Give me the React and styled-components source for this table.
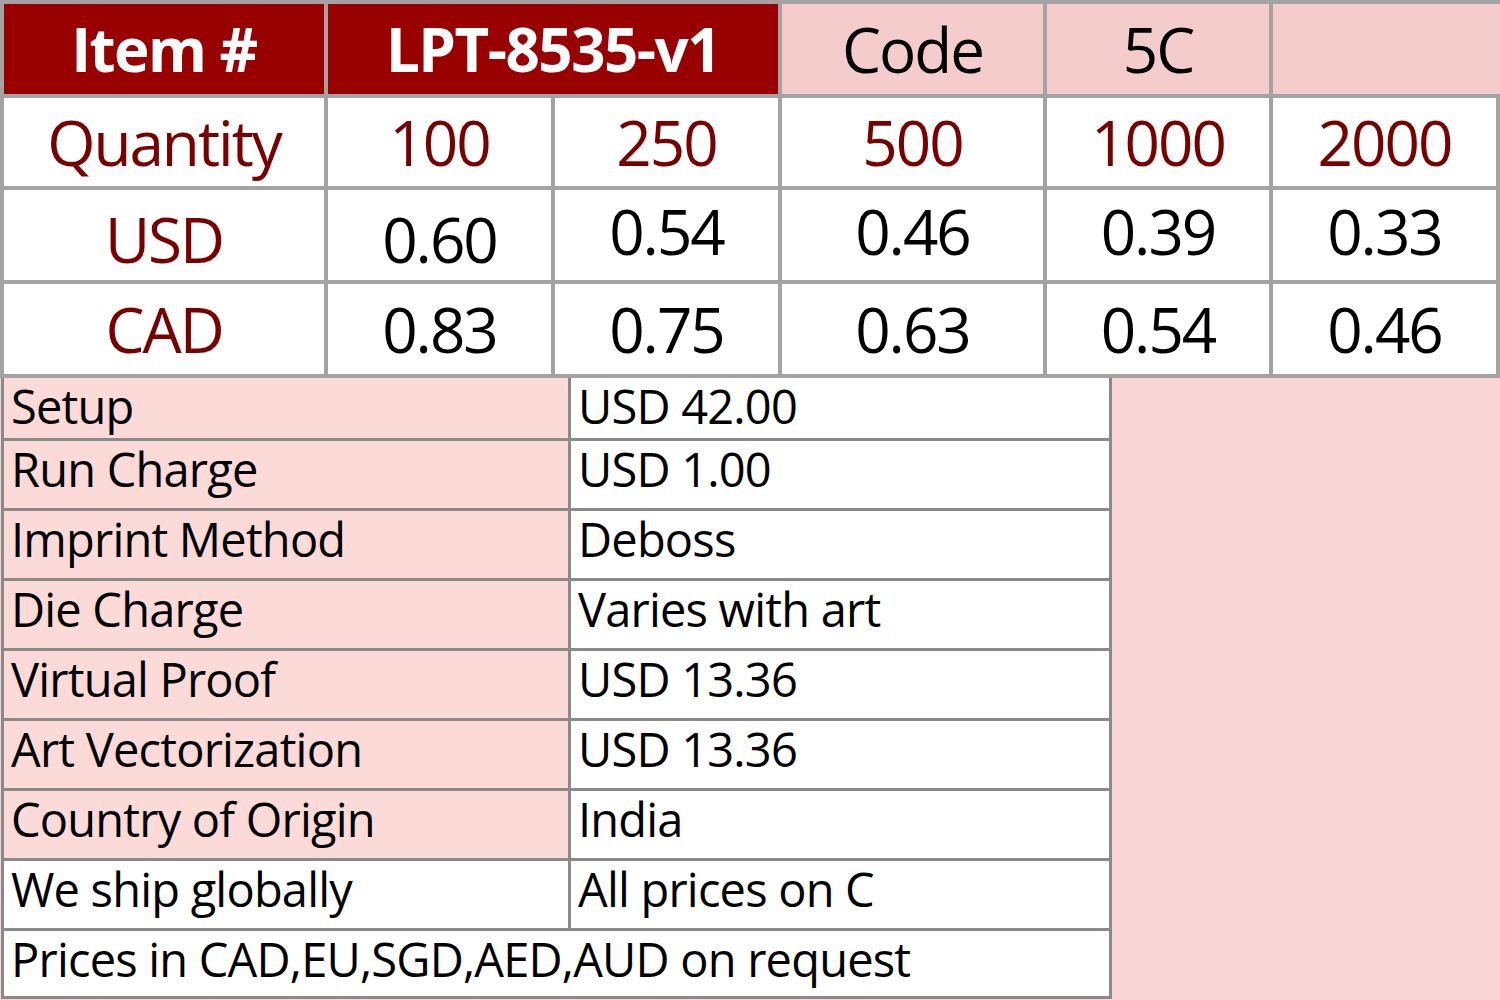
import React from "react";
import styled, { createGlobalStyle } from "styled-components";

const GlobalStyle = createGlobalStyle`
  html, body {
    margin: 0;
    padding: 0;
    background: #f9d6d5;
    font-family: "Open Sans", "Noto Sans", sans-serif;
  }
`;

const tiers = [
  { qty: "100", usd: "0.60", cad: "0.83", usdLow: true },
  { qty: "250", usd: "0.54", cad: "0.75" },
  { qty: "500", usd: "0.46", cad: "0.63" },
  { qty: "1000", usd: "0.39", cad: "0.54" },
  { qty: "2000", usd: "0.33", cad: "0.46" },
];

const details = [
  ["Setup", "USD 42.00"],
  ["Run Charge", "USD 1.00"],
  ["Imprint Method", "Deboss"],
  ["Die Charge", "Varies with art"],
  ["Virtual Proof", "USD 13.36"],
  ["Art Vectorization", "USD 13.36"],
  ["Country of Origin", "India"],
];

const App = () => {
  return (
    <>
      <GlobalStyle />
      <Page>
        <PriceGrid>
          <HeadCell>Item #</HeadCell>
          <HeadCell $span={2}>LPT-8535-v1</HeadCell>
          <CodeCell>Code</CodeCell>
          <CodeCell>5C</CodeCell>
          <CodeCell $last />

          <Cell $red>Quantity</Cell>
          {tiers.map((t) => (
            <Cell key={t.qty} $red>
              {t.qty}
            </Cell>
          ))}

          <Cell $red $nudge={8}>
            USD
          </Cell>
          {tiers.map((t) => (
            <Cell key={t.qty} $nudge={t.usdLow ? 8 : -8}>
              {t.usd}
            </Cell>
          ))}

          <Cell $red>CAD</Cell>
          {tiers.map((t) => (
            <Cell key={t.qty}>{t.cad}</Cell>
          ))}
        </PriceGrid>

        <InfoGrid>
          {details.map(([label, value]) => (
            <React.Fragment key={label}>
              <Label $pink>{label}</Label>
              <Label>{value}</Label>
            </React.Fragment>
          ))}
          <Label>We ship globally</Label>
          <Label>All prices on C</Label>
          <Label $wide>Prices in CAD,EU,SGD,AED,AUD on request</Label>
        </InfoGrid>
      </Page>
    </>
  );
};

export default App;

const Page = styled.div`
  width: 1500px;
  height: 1000px;
  overflow: hidden;
`;

const PriceGrid = styled.div`
  display: grid;
  grid-template-columns: 320px 223px 223px 261px 222px 223px;
  grid-template-rows: 90px 88px 90px 90px;
  gap: 4px;
  padding: 4px;
  background: #a3a3a3;
  font-size: 62px;
  line-height: 1;
  letter-spacing: -2px;
`;

const Cell = styled.div`
  display: flex;
  align-items: center;
  justify-content: center;
  background: #ffffff;
  color: ${(p) => (p.$red ? "#7a0000" : "#000000")};
  padding-top: ${(p) => (p.$nudge > 0 ? p.$nudge : 0)}px;
  padding-bottom: ${(p) => (p.$nudge < 0 ? -p.$nudge : 0)}px;
`;

const HeadCell = styled(Cell)`
  grid-column: span ${(p) => p.$span || 1};
  background: #990000;
  color: #ffffff;
  font-weight: 700;
  font-size: 60px;
  letter-spacing: -1.5px;
`;

const CodeCell = styled(Cell)`
  background: #f4cccc;
  margin-right: ${(p) => (p.$last ? "-4px" : "0")};
`;

const InfoGrid = styled.div`
  display: grid;
  width: 1111px;
  margin-left: 1px;
  grid-template-columns: 564px 538px;
  grid-template-rows: 60px repeat(7, 67px) 65px;
  gap: 3px;
  padding: 0 3px 3px 3px;
  box-sizing: border-box;
  background: #8a8a8a;
  font-size: 47px;
  line-height: 56px;
  letter-spacing: -0.8px;
`;

const Label = styled.div`
  grid-column: ${(p) => (p.$wide ? "1 / span 2" : "auto")};
  background: ${(p) => (p.$pink ? "#fbdad8" : "#ffffff")};
  color: #000000;
  padding-left: 7px;
  white-space: nowrap;
`;
